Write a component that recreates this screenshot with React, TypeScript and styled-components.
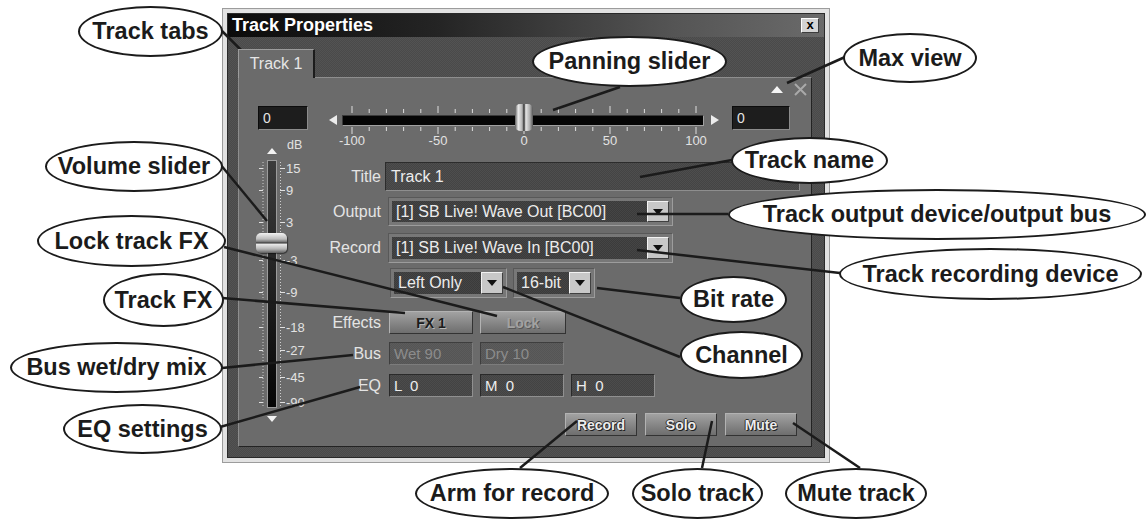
import React from "react";
import styled, { createGlobalStyle, css } from "styled-components";

const GlobalStyle = createGlobalStyle`
  html, body {
    margin: 0;
    padding: 0;
    background: #fff;
  }
  body {
    font-family: "Liberation Sans", Arial, sans-serif;
  }
`;

const dither = (a: string, b: string) => css`
  background-color: ${a};
  background-image: repeating-conic-gradient(${b} 0 25%, transparent 0 50%);
  background-size: 2px 2px;
`;

const callouts = [
  { text: "Track tabs", x: 78, y: 6, w: 145, h: 51 },
  { text: "Panning slider", x: 532, y: 36, w: 195, h: 51 },
  { text: "Max view", x: 843, y: 33, w: 134, h: 50 },
  { text: "Volume slider", x: 45, y: 141, w: 178, h: 51 },
  { text: "Track name", x: 731, y: 137, w: 157, h: 47 },
  { text: "Track output device/output bus", x: 728, y: 189, w: 418, h: 51 },
  { text: "Lock track FX", x: 37, y: 215, w: 189, h: 52 },
  { text: "Track recording device", x: 839, y: 248, w: 303, h: 52 },
  { text: "Track FX", x: 103, y: 273, w: 121, h: 54 },
  { text: "Bit rate", x: 680, y: 276, w: 107, h: 47 },
  { text: "Channel", x: 680, y: 331, w: 123, h: 48 },
  { text: "Bus wet/dry mix", x: 10, y: 342, w: 213, h: 51 },
  { text: "EQ settings", x: 63, y: 404, w: 159, h: 50 },
  { text: "Arm for record", x: 415, y: 468, w: 194, h: 51 },
  { text: "Solo track", x: 632, y: 468, w: 131, h: 51 },
  { text: "Mute track", x: 785, y: 468, w: 142, h: 51 },
];

const leaders = [
  [222, 31, 253, 62],
  [620, 87, 553, 110],
  [845, 57, 787, 83],
  [220, 164, 267, 221],
  [224, 247, 497, 316],
  [222, 298, 405, 313],
  [222, 368, 353, 355],
  [220, 427, 360, 387],
  [732, 160, 640, 177],
  [728, 214, 637, 214],
  [840, 273, 637, 250],
  [680, 298, 597, 288],
  [680, 357, 503, 287],
  [520, 468, 577, 421],
  [702, 468, 712, 421],
  [860, 468, 793, 423],
];

const volumeScale = [
  { y: 34, label: "15" },
  { y: 56, label: "9" },
  { y: 88, label: "3" },
  { y: 126, label: "-3" },
  { y: 158, label: "-9" },
  { y: 193, label: "-18" },
  { y: 216, label: "-27" },
  { y: 243, label: "-45" },
  { y: 268, label: "-90" },
];

const panTicks = Array.from({ length: 21 }, (_, i) => 10 + i * 17.2);
const panLabels = ["-100", "-50", "0", "50", "100"];

export default function App() {
  return (
    <>
      <GlobalStyle />
      <Stage>
        <Window>
          <Frame>
            <TitleBar>
              <span>Track Properties</span>
              <CloseButton>x</CloseButton>
            </TitleBar>
            <Body>
              <TabStrip>
                <Tab>Track 1</Tab>
              </TabStrip>
              <Panel>
                <IconRow>
                  <svg width="12" height="7" viewBox="0 0 12 7">
                    <polygon points="0,7 12,7 6,0" fill="#f4f4f4" />
                  </svg>
                  <svg width="13" height="13" viewBox="0 0 13 13">
                    <path d="M1 1 L12 12 M12 1 L1 12" stroke="#a9a9a9" strokeWidth="2" />
                  </svg>
                </IconRow>

                <Main>
                  <VolumeColumn>
                    <ValueBox $w={50} $ml={2}>0</ValueBox>
                    <Fader>
                      <svg width="60" height="290" viewBox="0 0 60 290">
                        <defs>
                          <linearGradient id="vtrack" x1="0" y1="0" x2="0" y2="1">
                            <stop offset="0" stopColor="#3c3c3c" />
                            <stop offset="1" stopColor="#060606" />
                          </linearGradient>
                        </defs>
                        <text x="31" y="15" fontSize="12.5" fill="#e2e2e2" fontFamily="Liberation Sans, Arial, sans-serif">dB</text>
                        <polygon points="11,20 21,20 16,14" fill="#f2f2f2" />
                        <line x1="7" y1="28" x2="7" y2="272" stroke="#cfcfcf" strokeDasharray="1 2" />
                        <line x1="24.5" y1="28" x2="24.5" y2="272" stroke="#cfcfcf" strokeDasharray="1 2" />
                        <rect x="11.5" y="26.5" width="9" height="247" fill="url(#vtrack)" stroke="#9c9c9c" />
                        {volumeScale.map((s) => (
                          <g key={s.label}>
                            <line x1="3" y1={s.y + 0.5} x2="7" y2={s.y + 0.5} stroke="#e0e0e0" />
                            <line x1="24" y1={s.y + 0.5} x2="29" y2={s.y + 0.5} stroke="#e0e0e0" />
                            <text x="30" y={s.y + 5} fontSize="13" fill="#e2e2e2" fontFamily="Liberation Sans, Arial, sans-serif">
                              {s.label}
                            </text>
                          </g>
                        ))}
                        <polygon points="11,282 21,282 16,288" fill="#f2f2f2" />
                      </svg>
                      <VolumeThumb $top={99} />
                    </Fader>
                  </VolumeColumn>

                  <RightColumn>
                    <PanRow>
                      <Arrow $ml={4} width="8" height="10" viewBox="0 0 8 10">
                        <polygon points="8,0 8,10 0,5" fill="#ececec" />
                      </Arrow>
                      <PanSlider>
                        <PanTrack />
                        <PanTicks width="362" height="28" viewBox="0 0 362 28">
                          {panTicks.map((x, i) => {
                            const major = i % 5 === 0;
                            return (
                              <g key={i} stroke="#dedede">
                                <line x1={x} y1={major ? 0 : 3} x2={x} y2="7" />
                                <line x1={x} y1="21" x2={x} y2={major ? 28 : 25} />
                              </g>
                            );
                          })}
                        </PanTicks>
                        <PanThumb style={{ left: 173 }} />
                      </PanSlider>
                      <Arrow $ml={7} width="8" height="10" viewBox="0 0 8 10">
                        <polygon points="0,0 0,10 8,5" fill="#ececec" />
                      </Arrow>
                      <ValueBox $w={58} $ml={13}>0</ValueBox>
                    </PanRow>
                    <PanLabels>
                      {panLabels.map((l, i) => (
                        <PanLabel key={l} style={{ left: panTicks[i * 5] }}>
                          {l}
                        </PanLabel>
                      ))}
                    </PanLabels>

                    <Form>
                      <FormRow $h={29} $mt={0}>
                        <Label>Title</Label>
                        <TextField>Track 1</TextField>
                      </FormRow>
                      <FormRow $h={29} $mt={6}>
                        <Label>Output</Label>
                        <SelectRow>
                          <Select value="[1] SB Live! Wave Out [BC00]" width={285} ml={1} />
                        </SelectRow>
                      </FormRow>
                      <FormRow $h={30} $mt={7}>
                        <Label>Record</Label>
                        <SelectRow>
                          <Select value="[1] SB Live! Wave In [BC00]" width={285} ml={1} />
                        </SelectRow>
                      </FormRow>
                      <FormRow $h={30} $mt={5}>
                        <Label />
                        <SelectRow>
                          <Select value="Left Only" width={117} ml={3} />
                          <Select value="16-bit" width={82} ml={6} />
                        </SelectRow>
                      </FormRow>
                      <FormRow $h={23} $mt={13}>
                        <Label>Effects</Label>
                        <Cells>
                          <PushButton $tone="dark" $w={84}>FX 1</PushButton>
                          <PushButton $tone="off" $w={86}>Lock</PushButton>
                        </Cells>
                      </FormRow>
                      <FormRow $h={23} $mt={8}>
                        <Label>Bus</Label>
                        <Cells>
                          <Readout $off>Wet 90</Readout>
                          <Readout $off>Dry 10</Readout>
                        </Cells>
                      </FormRow>
                      <FormRow $h={23} $mt={9}>
                        <Label>EQ</Label>
                        <Cells>
                          <Readout>{"L  0"}</Readout>
                          <Readout>{"M  0"}</Readout>
                          <Readout>{"H  0"}</Readout>
                        </Cells>
                      </FormRow>
                      <ButtonBar>
                        <PushButton $tone="light" $w={72}>Record</PushButton>
                        <PushButton $tone="light" $w={72}>Solo</PushButton>
                        <PushButton $tone="light" $w={72}>Mute</PushButton>
                      </ButtonBar>
                    </Form>
                  </RightColumn>
                </Main>
              </Panel>
            </Body>
          </Frame>
        </Window>

        <Leaders width="1148" height="520" viewBox="0 0 1148 520">
          {leaders.map(([x1, y1, x2, y2], i) => (
            <line key={i} x1={x1} y1={y1} x2={x2} y2={y2} stroke="#1b1b1b" strokeWidth="2.5" />
          ))}
        </Leaders>
        {callouts.map((c) => (
          <Callout key={c.text} $x={c.x} $y={c.y} $w={c.w} $h={c.h}>
            {c.text}
          </Callout>
        ))}
      </Stage>
    </>
  );
}

const Select = ({ value, width, ml }: { value: string; width: number; ml: number }) => (
  <SelectBox $w={width} $ml={ml}>
    <SelectValue>
      <span>{value}</span>
      <DropButton>
        <svg width="10" height="6" viewBox="0 0 10 6">
          <polygon points="0,0 10,0 5,6" fill="#111" />
        </svg>
      </DropButton>
    </SelectValue>
  </SelectBox>
);

const Stage = styled.div`
  position: relative;
  width: 1148px;
  height: 520px;
  overflow: hidden;
  box-sizing: border-box;
  padding: 8px 0 0 222px;
  background: #fff;
`;

const Window = styled.div`
  width: 608px;
  height: 455px;
  box-sizing: border-box;
  display: flex;
  padding: 4px;
  border: 1px solid #9c9c9c;
  background: #e2e2e2;
`;

const Frame = styled.div`
  flex: 1;
  display: flex;
  flex-direction: column;
  border: 1px solid #2a2a2a;
`;

const TitleBar = styled.div`
  height: 23px;
  display: flex;
  align-items: center;
  justify-content: space-between;
  padding: 0 5px 0 4px;
  background: linear-gradient(90deg, #0b0b0b 0%, #242424 35%, #555 75%, #6a6a6a 100%);
  color: #fff;
  font-size: 18px;
  font-weight: bold;
`;

const CloseButton = styled.div`
  width: 18px;
  height: 15px;
  box-sizing: border-box;
  display: flex;
  align-items: center;
  justify-content: center;
  border: 1px solid;
  border-color: #fff #3c3c3c #3c3c3c #fff;
  background: #d4d4d4;
  color: #000;
  font-size: 13px;
  font-weight: bold;
  line-height: 1;
  padding-bottom: 2px;
`;

const Body = styled.div`
  flex: 1;
  display: flex;
  flex-direction: column;
  padding: 12px 12px 10px 10px;
  ${dither("#4a4a4a", "#535353")}
`;

const TabStrip = styled.div`
  display: flex;
  height: 28px;
`;

const Tab = styled.div`
  width: 77px;
  height: 29px;
  margin-bottom: -1px;
  box-sizing: border-box;
  display: flex;
  align-items: center;
  justify-content: center;
  border-top: 1px solid #9c9c9c;
  border-left: 1px solid #9c9c9c;
  border-right: 2px solid #1c1c1c;
  background: #6b6b6b;
  color: #e6e6e6;
  font-size: 16px;
  position: relative;
  z-index: 1;
`;

const Panel = styled.div`
  flex: 1;
  display: flex;
  flex-direction: column;
  padding: 5px 11px 0 17px;
  border: 1px solid;
  border-color: #8e8e8e #232323 #232323 #8e8e8e;
  background: #6b6b6b;
`;

const IconRow = styled.div`
  height: 13px;
  display: flex;
  align-items: center;
  justify-content: flex-end;
  gap: 11px;
  margin-right: -7px;
`;

const Main = styled.div`
  display: flex;
  gap: 9px;
  margin-top: 10px;
`;

const VolumeColumn = styled.div`
  width: 60px;
  display: flex;
  flex-direction: column;
`;

const ValueBox = styled.div<{ $w: number; $ml: number }>`
  width: ${(p) => p.$w}px;
  height: 24px;
  margin-left: ${(p) => p.$ml}px;
  flex: none;
  box-sizing: border-box;
  display: flex;
  align-items: center;
  padding-left: 4px;
  border: 1px solid;
  border-color: #0c0c0c #8c8c8c #8c8c8c #0c0c0c;
  background: #1d1d1d;
  color: #e4e4e4;
  font-size: 14px;
`;

const Fader = styled.div`
  position: relative;
  height: 290px;
  margin-top: 4px;

  svg {
    display: block;
  }
`;

const VolumeThumb = styled.div<{ $top: number }>`
  position: absolute;
  left: 0;
  top: ${(p) => p.$top}px;
  width: 31px;
  height: 20px;
  border-radius: 5px;
  background: linear-gradient(
    180deg,
    #f2f2f2 0%,
    #bdbdbd 30%,
    #6e6e6e 46%,
    #262626 50%,
    #ececec 55%,
    #b4b4b4 80%,
    #5e5e5e 100%
  );
  box-shadow: 1px 1px 1px rgba(0, 0, 0, 0.5);
`;

const RightColumn = styled.div`
  flex: 1;
  display: flex;
  flex-direction: column;
`;

const PanRow = styled.div`
  height: 24px;
  display: flex;
  align-items: center;
`;

const Arrow = styled.svg<{ $ml: number }>`
  flex: none;
  margin-left: ${(p) => p.$ml}px;
  margin-top: 3px;
`;

const PanSlider = styled.div`
  position: relative;
  width: 362px;
  height: 24px;
  margin-left: 5px;
  flex: none;
`;

const PanTrack = styled.div`
  height: 11px;
  margin-top: 9px;
  box-sizing: border-box;
  border: 1px solid;
  border-color: #3a3a3a #a0a0a0 #a0a0a0 #3a3a3a;
  background: #050505;
`;

const PanTicks = styled.svg`
  position: absolute;
  left: 0;
  top: 0;
  overflow: visible;
`;

const PanThumb = styled.div`
  position: absolute;
  top: -2px;
  width: 18px;
  height: 27px;
  border-radius: 5px;
  background: linear-gradient(
    90deg,
    #5c5c5c 0%,
    #ebebeb 18%,
    #b2b2b2 40%,
    #2e2e2e 50%,
    #e6e6e6 60%,
    #aeaeae 82%,
    #555 100%
  );
`;

const PanLabels = styled.div`
  position: relative;
  width: 362px;
  height: 14px;
  margin: 4px 0 0 17px;
`;

const PanLabel = styled.span`
  position: absolute;
  top: 0;
  transform: translateX(-50%);
  color: #e2e2e2;
  font-size: 13px;
  line-height: 14px;
`;

const Form = styled.div`
  display: flex;
  flex-direction: column;
  margin-top: 14px;
`;

const FormRow = styled.div<{ $h: number; $mt: number }>`
  display: grid;
  grid-template-columns: 57px 1fr;
  column-gap: 5px;
  align-items: stretch;
  height: ${(p) => p.$h}px;
  margin-top: ${(p) => p.$mt}px;
`;

const Label = styled.div`
  display: flex;
  align-items: center;
  justify-content: flex-end;
  padding-right: 1px;
  color: #e4e4e4;
  font-size: 16px;
`;

const TextField = styled.div`
  width: 415px;
  margin-left: -2px;
  box-sizing: border-box;
  display: flex;
  align-items: center;
  padding-left: 5px;
  border: 1px solid;
  border-color: #2c2c2c #8e8e8e #8e8e8e #2c2c2c;
  ${dither("#444", "#4e4e4e")}
  color: #ececec;
  font-size: 16px;
`;

const SelectRow = styled.div`
  display: flex;
`;

const SelectBox = styled.div<{ $w: number; $ml: number }>`
  width: ${(p) => p.$w}px;
  margin-left: ${(p) => p.$ml}px;
  box-sizing: border-box;
  display: flex;
  padding: 3px;
  border: 1px solid;
  border-color: #585858 #9c9c9c #9c9c9c #585858;
  background: #777;
`;

const SelectValue = styled.div`
  flex: 1;
  display: flex;
  align-items: center;
  justify-content: space-between;
  padding-left: 4px;
  overflow: hidden;
  white-space: nowrap;
  ${dither("#3b3b3b", "#454545")}
  color: #ececec;
  font-size: 16px;
`;

const DropButton = styled.div`
  width: 22px;
  height: 100%;
  flex: none;
  box-sizing: border-box;
  display: flex;
  align-items: center;
  justify-content: center;
  border: 1px solid;
  border-color: #f2f2f2 #404040 #404040 #f2f2f2;
  background: #c8c8c8;
`;

const Cells = styled.div`
  display: flex;
  gap: 7px;
  margin-left: 2px;
`;

const tones = {
  dark: css`
    color: #1c1c1c;
    text-shadow: 1px 1px 0 #b8b8b8;
  `,
  off: css`
    color: #a2a2a2;
    text-shadow: 1px 1px 0 #585858;
  `,
  light: css`
    color: #ececec;
    text-shadow: 1px 1px 0 #1e1e1e, -1px 0 0 #2e2e2e, 0 -1px 0 #2e2e2e;
  `,
};

const PushButton = styled.div<{ $tone: keyof typeof tones; $w: number }>`
  width: ${(p) => p.$w}px;
  height: 23px;
  box-sizing: border-box;
  display: flex;
  align-items: center;
  justify-content: center;
  border: 1px solid;
  border-color: #b2b2b2 #333 #333 #b2b2b2;
  background: linear-gradient(180deg, #a2a2a2 0%, #8a8a8a 45%, #6e6e6e 100%);
  font-size: 14px;
  font-weight: bold;
  ${(p) => tones[p.$tone]}
`;

const Readout = styled.div<{ $off?: boolean }>`
  width: 84px;
  box-sizing: border-box;
  display: flex;
  align-items: center;
  padding-left: 4px;
  white-space: pre;
  border: 1px solid;
  font-size: 15px;
  ${(p) =>
    p.$off
      ? css`
          border-color: #3e3e3e #7c7c7c #7c7c7c #3e3e3e;
          ${dither("#555", "#5c5c5c")}
          color: #8c8c8c;
        `
      : css`
          border-color: #2a2a2a #909090 #909090 #2a2a2a;
          ${dither("#434343", "#4c4c4c")}
          color: #ededed;
        `}
`;

const ButtonBar = styled.div`
  display: flex;
  justify-content: flex-end;
  gap: 8px;
  margin: 16px 3px 0 0;
`;

const Leaders = styled.svg`
  position: absolute;
  left: 0;
  top: 0;
  pointer-events: none;
`;

const Callout = styled.div<{ $x: number; $y: number; $w: number; $h: number }>`
  position: absolute;
  left: ${(p) => p.$x}px;
  top: ${(p) => p.$y}px;
  width: ${(p) => p.$w}px;
  height: ${(p) => p.$h}px;
  box-sizing: border-box;
  display: flex;
  align-items: center;
  justify-content: center;
  border: 2.5px solid #1b1b1b;
  border-radius: 50%;
  background: #fff;
  color: #1b1b1b;
  font-size: 23.5px;
  font-weight: bold;
  white-space: nowrap;
`;
